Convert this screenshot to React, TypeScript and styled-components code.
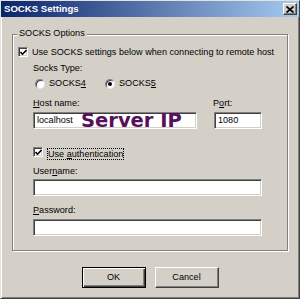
import React from 'react';
import styled, { createGlobalStyle } from 'styled-components';

const Global = createGlobalStyle`
  html, body { margin: 0; padding: 0; background: #d4d0c8; }
  body { font-family: "Liberation Sans", Arial, sans-serif; font-size: 9.1px; color: #000; }
  * { box-sizing: border-box; }
`;

const Window = styled.div`
  width: 300px;
  height: 299px;
  background: #d4d0c8;
  border: 1px solid;
  border-color: #e4e2de #404040 #404040 #e4e2de;
  box-shadow: inset 1px 1px #fff, inset -1px -1px #808080;
  display: flex;
  flex-direction: column;
`;

const TitleBar = styled.div`
  height: 16px;
  flex: none;
  display: flex;
  align-items: center;
  justify-content: space-between;
  padding: 0 2px 0 3px;
  background: linear-gradient(to right, #0a246a, #a6caf0);
`;

const TitleText = styled.span`
  color: #fff;
  font-weight: bold;
  font-size: 9.6px;
  line-height: 12px;
`;

const CloseButton = styled.div`
  width: 14px;
  height: 12px;
  background: #d4d0c8;
  border: 1px solid;
  border-color: #fff #404040 #404040 #fff;
  box-shadow: inset -1px -1px #808080;
  display: flex;
  align-items: center;
  justify-content: center;
`;

const Body = styled.div`
  flex: 1;
  padding: 17px 10px 0 11px;
  display: flex;
  flex-direction: column;
`;

const Group = styled.div`
  position: relative;
  width: 276px;
  height: 217px;
  border: 1px solid #808080;
  box-shadow: inset 1px 1px #fff, 1px 1px #fff;
  padding: 12px 0 0 5px;
  display: flex;
  flex-direction: column;
`;

const Legend = styled.span`
  position: absolute;
  top: -7px;
  left: 4px;
  padding: 0 2px;
  line-height: 11px;
  background: #d4d0c8;
`;

const CheckRow = styled.div<{ $mt?: number }>`
  display: flex;
  align-items: flex-start;
  gap: 4px;
  margin-top: ${(p) => p.$mt ?? 0}px;
  line-height: 10px;
`;

const CheckBoxBox = styled.span`
  width: 10px;
  height: 10px;
  flex: none;
  background: #fff;
  border: 1px solid;
  border-color: #808080 #fff #fff #808080;
  box-shadow: inset 1px 1px #404040, inset -1px -1px #d4d0c8;
  display: flex;
  align-items: center;
  justify-content: center;
`;

const FocusLabel = styled.span`
  margin-top: 1px;
  border: 1px dotted #000;
  line-height: 10px;
`;

const Indent = styled.div`
  padding-left: 15px;
  display: flex;
  flex-direction: column;
`;

const Label = styled.div<{ $mt?: number }>`
  line-height: 11px;
  margin-top: ${(p) => p.$mt ?? 0}px;
`;

const RadioRow = styled.div`
  display: flex;
  margin-top: 4px;
  margin-left: 2px;
  height: 11px;
`;

const RadioItem = styled.div<{ $w?: number }>`
  display: flex;
  align-items: center;
  gap: 4px;
  width: ${(p) => (p.$w ? `${p.$w}px` : 'auto')};
  line-height: 11px;
`;

const RadioCircle = styled.span<{ $on?: boolean }>`
  width: 10px;
  height: 10px;
  border-radius: 50%;
  background: #fff;
  border: 1px solid;
  border-color: #808080 #e8e8e8 #e8e8e8 #808080;
  box-shadow: inset 1px 1px #404040;
  display: flex;
  align-items: center;
  justify-content: center;
  &::after {
    content: '';
    display: ${(p) => (p.$on ? 'block' : 'none')};
    width: 4px;
    height: 4px;
    border-radius: 50%;
    background: #000;
  }
`;

const HostGrid = styled.div`
  display: grid;
  grid-template-columns: 164px 48px;
  column-gap: 17px;
  margin-top: 9px;
`;

const Field = styled.div<{ $gap?: number }>`
  display: flex;
  flex-direction: column;
  gap: ${(p) => p.$gap ?? 3}px;
`;

const PortLabel = styled(Label)`
  margin-left: -1px;
`;

const InputWrap = styled.div`
  position: relative;
`;

const TextInput = styled.div<{ $w?: number }>`
  width: ${(p) => (p.$w ? `${p.$w}px` : '100%')};
  height: 17px;
  background: #fff;
  border: 1px solid;
  border-color: #808080 #fff #fff #808080;
  box-shadow: inset 1px 1px #404040, inset -1px -1px #d4d0c8;
  padding: 0 3px;
  display: flex;
  align-items: center;
  line-height: 11px;
`;

const Annotation = styled.span`
  position: absolute;
  left: 48px;
  top: -1px;
  font-family: "DejaVu Sans", Verdana, sans-serif;
  font-weight: bold;
  font-size: 19.5px;
  line-height: 20px;
  color: #56115c;
  white-space: nowrap;
`;

const ButtonRow = styled.div`
  width: 276px;
  margin-top: 16px;
  display: flex;
  justify-content: center;
  gap: 9px;
`;

const Button = styled.div<{ $default?: boolean }>`
  width: 64px;
  height: 21px;
  display: flex;
  align-items: center;
  justify-content: center;
  background: #d4d0c8;
  border: 1px solid;
  border-color: ${(p) => (p.$default ? '#000' : '#fff #404040 #404040 #fff')};
  box-shadow: ${(p) =>
    p.$default
      ? 'inset 1px 1px #fff, inset -1px -1px #404040, inset -2px -2px #808080'
      : 'inset -1px -1px #808080'};
  line-height: 11px;
`;

const Check = () => (
  <svg width="7" height="7" viewBox="0 0 7 7">
    <polyline points="0.5,3 2.5,5.2 6.5,1" fill="none" stroke="#000" strokeWidth="1.6" />
  </svg>
);

const CloseX = () => (
  <svg width="8" height="7" viewBox="0 0 8 7">
    <path d="M0.5 0.5 L7.5 6.5 M7.5 0.5 L0.5 6.5" stroke="#000" strokeWidth="1.7" />
  </svg>
);

export default function App() {
  return (
    <>
      <Global />
      <Window>
        <TitleBar>
          <TitleText>SOCKS Settings</TitleText>
          <CloseButton>
            <CloseX />
          </CloseButton>
        </TitleBar>
        <Body>
          <Group>
            <Legend>SOCKS Options</Legend>
            <CheckRow>
              <CheckBoxBox>
                <Check />
              </CheckBoxBox>
              <span>Use SOCKS settings below when connecting to remote host</span>
            </CheckRow>
            <Indent>
              <Label $mt={6}>Socks Type:</Label>
              <RadioRow>
                <RadioItem $w={70}>
                  <RadioCircle />
                  <span>
                    SOCKS<u>4</u>
                  </span>
                </RadioItem>
                <RadioItem>
                  <RadioCircle $on />
                  <span>
                    SOCKS<u>5</u>
                  </span>
                </RadioItem>
              </RadioRow>
              <HostGrid>
                <Field>
                  <Label>
                    <u>H</u>ost name:
                  </Label>
                  <InputWrap>
                    <TextInput>localhost</TextInput>
                    <Annotation>Server IP</Annotation>
                  </InputWrap>
                </Field>
                <Field>
                  <PortLabel>
                    P<u>o</u>rt:
                  </PortLabel>
                  <TextInput>1080</TextInput>
                </Field>
              </HostGrid>
              <CheckRow $mt={18}>
                <CheckBoxBox>
                  <Check />
                </CheckBoxBox>
                <FocusLabel>
                  Use <u>a</u>uthentication
                </FocusLabel>
              </CheckRow>
              <Field $gap={2}>
                <Label $mt={6}>
                  User<u>n</u>ame:
                </Label>
                <TextInput $w={229} />
              </Field>
              <Field $gap={3}>
                <Label $mt={9}>
                  <u>P</u>assword:
                </Label>
                <TextInput $w={229} />
              </Field>
            </Indent>
          </Group>
          <ButtonRow>
            <Button $default>OK</Button>
            <Button>Cancel</Button>
          </ButtonRow>
        </Body>
      </Window>
    </>
  );
}
